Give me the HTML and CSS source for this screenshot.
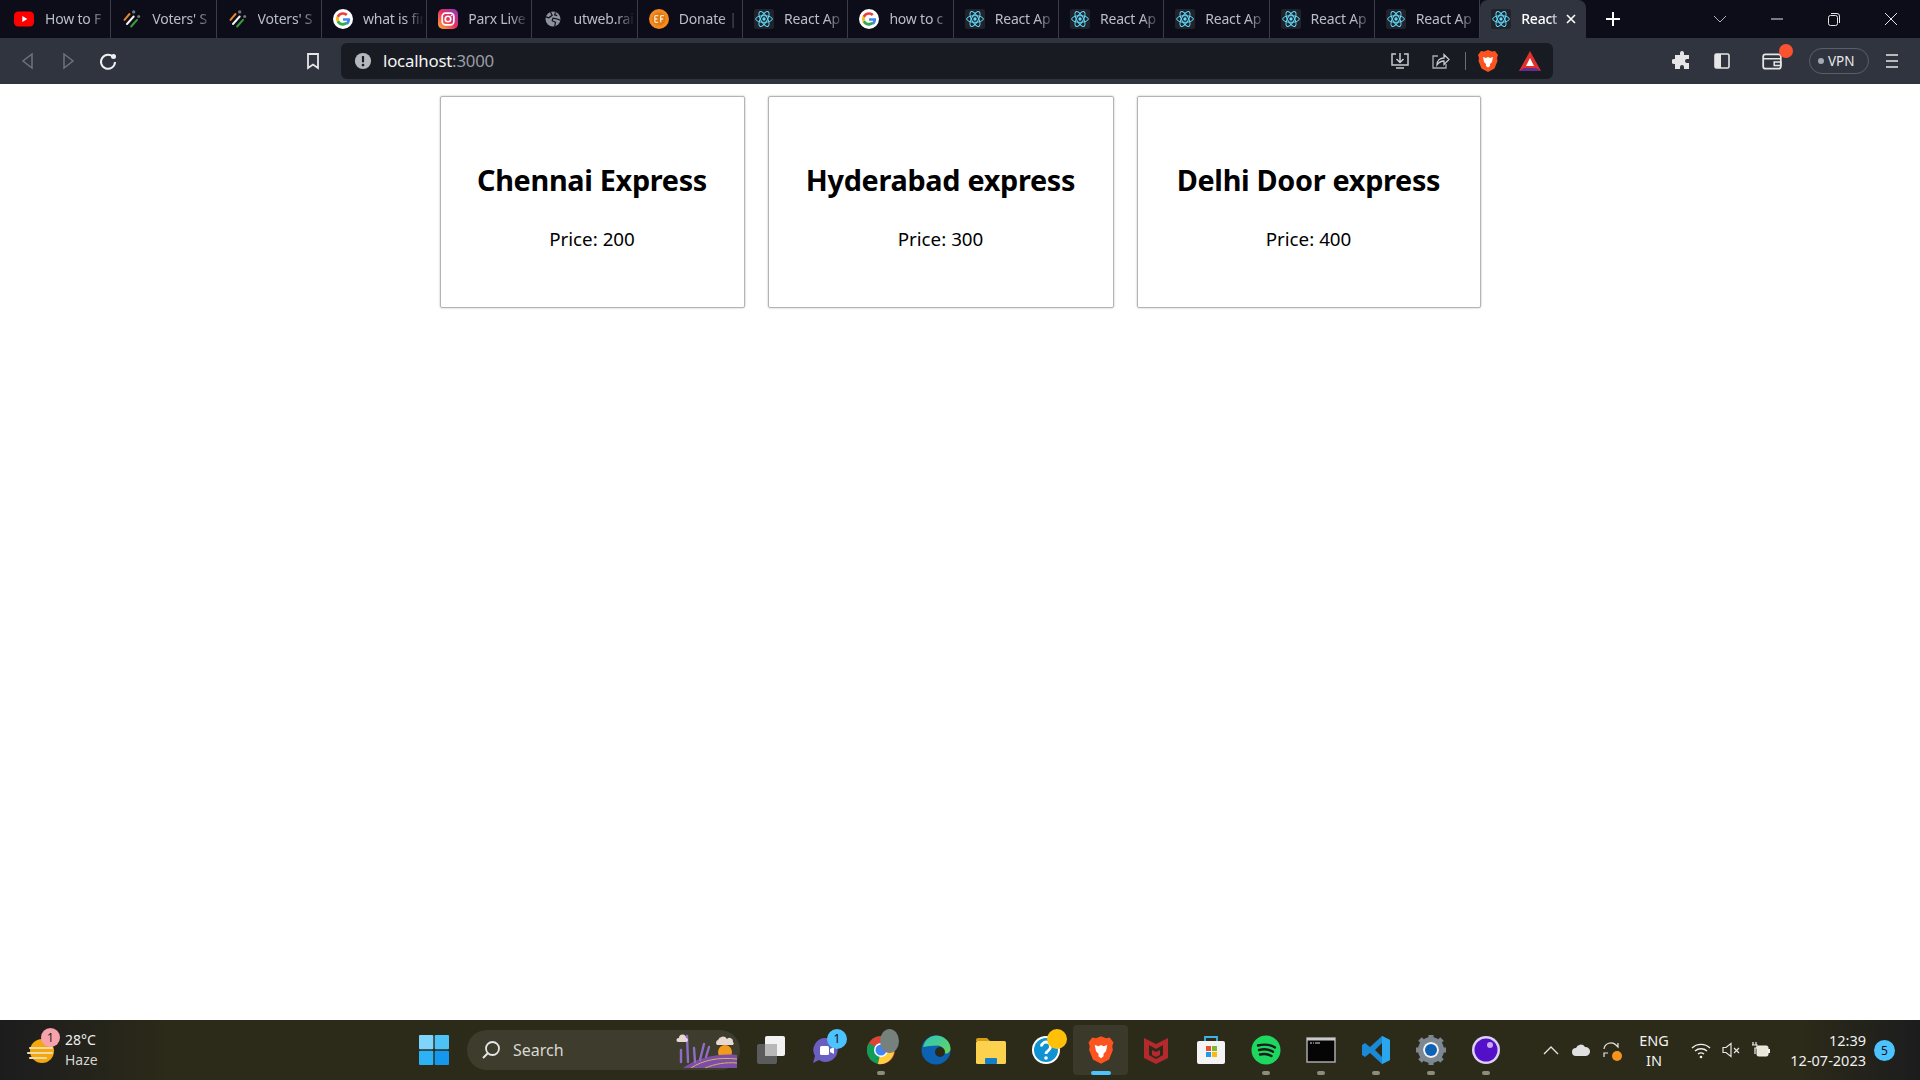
FILE: index.html
```html
<!DOCTYPE html>
<html lang="en">
<head>
<meta charset="UTF-8">
<title>React App</title>
<link rel="stylesheet" href="styles.css">
</head>
<body>
<svg class="defs" width="0" height="0">
  <symbol id="react" viewBox="0 0 24 24">
    <rect width="24" height="24" rx="3" fill="#20232a"/>
    <g fill="none" stroke="#61dafb" stroke-width="1.2">
      <ellipse cx="12" cy="12" rx="10" ry="4"/>
      <ellipse cx="12" cy="12" rx="10" ry="4" transform="rotate(60 12 12)"/>
      <ellipse cx="12" cy="12" rx="10" ry="4" transform="rotate(120 12 12)"/>
    </g>
    <circle cx="12" cy="12" r="2" fill="#61dafb"/>
  </symbol>
  <symbol id="google" viewBox="0 0 24 24">
    <circle cx="12" cy="12" r="12" fill="#fff"/>
    <path d="M12 11v3h5a5 5 0 0 1-1.8 2.6l2.7 2.2c1.700-1.500 2.600-3.800 2.600-6.400 0-.5 0-1-.1-1.400z" fill="#4285f4"/>
    <path d="M7.200 13.400l-2.800 2.200C5.800 18.300 8.700 20 12 20c2.300 0 4.300-.8 5.900-2.200l-2.700-2.200c-.8.600-1.900 1-3.200 1-2.200 0-4.100-1.400-4.800-3.200z" fill="#34a853"/>
    <path d="M4.400 8.400a8.200 8.200 0 0 0 0 7.200l2.800-2.200a5 5 0 0 1 0-2.800z" fill="#fbbc05"/>
    <path d="M12 7c1.300 0 2.400.5 3.300 1.300l2.400-2.400A8 8 0 0 0 12 4C8.700 4 5.800 5.800 4.400 8.400l2.800 2.200C7.900 8.500 9.800 7 12 7z" fill="#ea4335"/>
  </symbol>
  <symbol id="voters" viewBox="0 0 24 24">
    <g stroke-width="2.400" stroke-linecap="round" fill="none">
      <path d="M3 13l6-7" stroke="#e8842c"/>
      <path d="M6 18l8-9" stroke="#f2f2f2"/>
      <path d="M11 21l7-8" stroke="#3e9a3e"/>
    </g>
    <circle cx="14" cy="3.500" r="2" fill="#777"/>
    <circle cx="20" cy="9" r="1.800" fill="#777"/>
  </symbol>
  <symbol id="brave" viewBox="0 0 24 24">
    <path d="M12 1l4 1.500 3-.5 3 4-1 3 .5 3-3 7.500L12 23l-6.500-3.500-3-7.500.5-3-1-3 3-4 3 .5z" fill="#fb5420"/>
    <path d="M7 8l3 1 2-1 2 1 3-1-1 5-2 2v2l-2 1.500L10 17v-2l-2-2z" fill="#fff"/>
  </symbol>
</svg>

<header class="tabstrip">
  <div class="tab tab-first">
    <svg class="tab-icon" viewBox="0 0 24 24"><rect y="3" width="24" height="18" rx="5" fill="#f00"/><path d="M10 8.500l6 3.500-6 3.500z" fill="#fff"/></svg>
    <span class="tab-title">How to F</span>
  </div>
  <div class="tab"><svg class="tab-icon"><use href="#voters"/></svg><span class="tab-title">Voters' S</span></div>
  <div class="tab"><svg class="tab-icon"><use href="#voters"/></svg><span class="tab-title">Voters' S</span></div>
  <div class="tab"><svg class="tab-icon"><use href="#google"/></svg><span class="tab-title">what is fir</span></div>
  <div class="tab">
    <svg class="tab-icon" viewBox="0 0 24 24">
      <defs><linearGradient id="insta" x1="0" y1="1" x2="1" y2="0"><stop offset="0" stop-color="#fdb13a"/><stop offset=".5" stop-color="#e8305f"/><stop offset="1" stop-color="#8a3ac4"/></linearGradient></defs>
      <rect width="24" height="24" rx="6" fill="url(#insta)"/>
      <rect x="5" y="5" width="14" height="14" rx="4" fill="none" stroke="#fff" stroke-width="2"/>
      <circle cx="12" cy="12" r="3.300" fill="none" stroke="#fff" stroke-width="2"/>
      <circle cx="16.200" cy="7.800" r="1" fill="#fff"/>
    </svg>
    <span class="tab-title">Parx Live</span>
  </div>
  <div class="tab">
    <svg class="tab-icon" viewBox="0 0 24 24"><circle cx="12" cy="12" r="9" fill="#8d929c"/><path d="M9 3.500l2 4-4 3-3.500-1M14 21l1-5-4-2 1-3 5 1 3.800 1.500M15 4l-1 3 3 1" fill="none" stroke="#0c0d18" stroke-width="1.400"/></svg>
    <span class="tab-title">utweb.rai</span>
  </div>
  <div class="tab">
    <svg class="tab-icon" viewBox="0 0 24 24"><circle cx="12" cy="12" r="12" fill="#f58a1f"/><circle cx="12" cy="12" r="8" fill="#e07a14"/><path d="M7 8h4M7 12h3M7 16h4M7 8v8M14 8h4M14 12h3M14 8v8" fill="none" stroke="#fde3c4" stroke-width="1.600"/></svg>
    <span class="tab-title">Donate |</span>
  </div>
  <div class="tab"><svg class="tab-icon"><use href="#react"/></svg><span class="tab-title">React Ap</span></div>
  <div class="tab"><svg class="tab-icon"><use href="#google"/></svg><span class="tab-title">how to c</span></div>
  <div class="tab"><svg class="tab-icon"><use href="#react"/></svg><span class="tab-title">React Ap</span></div>
  <div class="tab"><svg class="tab-icon"><use href="#react"/></svg><span class="tab-title">React Ap</span></div>
  <div class="tab"><svg class="tab-icon"><use href="#react"/></svg><span class="tab-title">React Ap</span></div>
  <div class="tab"><svg class="tab-icon"><use href="#react"/></svg><span class="tab-title">React Ap</span></div>
  <div class="tab"><svg class="tab-icon"><use href="#react"/></svg><span class="tab-title">React Ap</span></div>
  <div class="tab tab-active">
    <svg class="tab-icon"><use href="#react"/></svg>
    <span class="tab-title">React</span>
    <svg class="tab-close" viewBox="0 0 12 12"><path d="M2 2l8 8M10 2l-8 8" stroke="#fff" stroke-width="1.600"/></svg>
  </div>
  <svg class="new-tab" viewBox="0 0 16 16"><path d="M8 1v14M1 8h14" stroke="#fff" stroke-width="2"/></svg>
  <div class="window-controls">
    <svg class="win-btn" viewBox="0 0 16 16"><path d="M2 5l6 6 6-6" fill="none" stroke="#b0b3bb"/></svg>
    <svg class="win-btn" viewBox="0 0 16 16"><path d="M2 8h12" stroke="#e6e6e6"/></svg>
    <svg class="win-btn" viewBox="0 0 16 16"><rect x="2.500" y="4.500" width="9" height="10" rx="2" fill="none" stroke="#e6e6e6"/><path d="M5 2.500h6a2.500 2.500 0 0 1 2.500 2.500v7" fill="none" stroke="#e6e6e6"/></svg>
    <svg class="win-btn" viewBox="0 0 16 16"><path d="M2 2l12 12M14 2L2 14" stroke="#e6e6e6"/></svg>
  </div>
</header>

<nav class="toolbar">
  <svg class="tool" viewBox="0 0 20 20"><path d="M14 3L5 10l9 7z" fill="none" stroke="#6e727c" stroke-width="1.500"/></svg>
  <svg class="tool" viewBox="0 0 20 20"><path d="M6 3l9 7-9 7z" fill="none" stroke="#6e727c" stroke-width="1.500"/></svg>
  <svg class="tool" viewBox="0 0 20 20"><path d="M15.500 6.500A7 7 0 1 0 17 11" fill="none" stroke="#f0f0f0" stroke-width="2"/><circle cx="15.500" cy="5.500" r="2.500" fill="#f0f0f0"/></svg>
  <svg class="tool tool-bookmark" viewBox="0 0 20 20"><path d="M5 3h10v14l-5-3.500L5 17z" fill="none" stroke="#e6e6e6" stroke-width="1.800"/></svg>
  <div class="address">
    <svg class="address-info" viewBox="0 0 20 20"><circle cx="10" cy="10" r="9" fill="#b4b7bd"/><path d="M10 4.500v7" stroke="#181b22" stroke-width="2.400"/><circle cx="10" cy="14.500" r="1.500" fill="#181b22"/></svg>
    <span class="url">localhost<span class="url-port">:3000</span></span>
    <div class="address-actions">
      <svg class="tool" viewBox="0 0 20 20"><path d="M6 3H2v11h16V3h-4M10 2v9M6.500 8l3.500 3.500L13.500 8M6 17h8" fill="none" stroke="#c8cad0" stroke-width="1.500"/></svg>
      <svg class="tool" viewBox="0 0 20 20"><path d="M8 5H3v12h13v-4" fill="none" stroke="#a9acb3" stroke-width="1.300"/><path d="M7 14c0-5 3-7 7-7V3.500l5 5-5 5V10c-3 0-5 1-7 4z" fill="none" stroke="#c8cad0" stroke-width="1.300"/></svg>
      <span class="address-divider"></span>
      <svg class="tool tool-large" viewBox="0 0 24 24"><use href="#brave"/></svg>
      <svg class="tool tool-large" viewBox="0 0 24 24"><path d="M12 2l11 20H1z" fill="#e0312c"/><path d="M1 22l5-3h12l5 3z" fill="#662d91"/><path d="M12 9l4 8H8z" fill="#fff"/></svg>
    </div>
  </div>
  <div class="toolbar-right">
    <svg class="tool" viewBox="0 0 20 20"><path d="M8 2a2 2 0 0 1 4 0v2h5v4h-2a2 2 0 0 0 0 4h2v6h-5v-2a2 2 0 0 0-4 0v2H3v-5H2a2.500 2.500 0 0 1 0-5h1V4h5z" fill="#e6e6e6"/></svg>
    <svg class="tool" viewBox="0 0 20 20"><rect x="3" y="3" width="14" height="14" rx="1.500" fill="none" stroke="#e6e6e6" stroke-width="1.600"/><rect x="3" y="3" width="6" height="14" fill="#e6e6e6"/></svg>
    <div class="wallet">
      <svg class="wallet-icon" viewBox="0 0 20 20"><rect x="2" y="4" width="16" height="13" rx="2" fill="none" stroke="#e6e6e6" stroke-width="1.600"/><path d="M2 8h16M12 11h6v3h-6z" fill="none" stroke="#e6e6e6" stroke-width="1.400"/></svg>
      <span class="wallet-dot"></span>
    </div>
    <div class="vpn"><span class="vpn-dot"></span>VPN</div>
    <svg class="tool" viewBox="0 0 20 20"><path d="M4 4h12M4 10h12M4 16h12" stroke="#e6e6e6" stroke-width="1.500"/></svg>
  </div>
</nav>

<main class="page">
  <div class="card">
    <h2 class="card-title">Chennai Express</h2>
    <p class="card-price">Price: 200</p>
  </div>
  <div class="card">
    <h2 class="card-title">Hyderabad express</h2>
    <p class="card-price">Price: 300</p>
  </div>
  <div class="card">
    <h2 class="card-title">Delhi Door express</h2>
    <p class="card-price">Price: 400</p>
  </div>
</main>

<footer class="taskbar">
  <div class="weather">
    <div class="weather-icon">
      <svg viewBox="0 0 32 32" width="32" height="32"><circle cx="17" cy="17" r="12" fill="#f5a80c"/><path d="M5 14h22M3 19h24M5 24h16" stroke="#eed9a8" stroke-width="2.200" stroke-linecap="round"/></svg>
      <span class="weather-badge">1</span>
    </div>
    <div class="weather-text">
      <span>28°C</span>
      <span class="weather-sub">Haze</span>
    </div>
  </div>

  <svg class="start" viewBox="0 0 30 30">
    <rect x="0" y="0" width="14.300" height="14.300" rx="1" fill="#7fd4fb"/>
    <rect x="15.700" y="0" width="14.300" height="14.300" rx="1" fill="#4cc2f7"/>
    <rect x="0" y="15.700" width="14.300" height="14.300" rx="1" fill="#2bb3f5"/>
    <rect x="15.700" y="15.700" width="14.300" height="14.300" rx="1" fill="#1398ee"/>
  </svg>

  <div class="search">
    <svg class="search-icon" viewBox="0 0 20 20"><circle cx="11.500" cy="8.500" r="6.500" fill="none" stroke="#e6e6e6" stroke-width="1.800"/><path d="M7 13l-5 5" stroke="#e6e6e6" stroke-width="2"/></svg>
    <span class="search-text">Search</span>
    <svg class="search-art" viewBox="0 0 62 36">
      <circle cx="50" cy="20" r="7" fill="#f29a1e"/>
      <path d="M8 36c14-10 34-15 54-13v13z" fill="#7d4ea8"/>
      <path d="M16 36c12-8 28-11 46-9M30 36c10-4 20-6 32-5" fill="none" stroke="#d4b45c" stroke-width="1"/>
      <g stroke="#8e6cc7" stroke-width="2.400" stroke-linecap="round"><path d="M6 30V18M13 30L12 4M20 30l-1-14M25 28l4-16M31 25l3-10"/></g>
      <path d="M42 13a3 3 0 0 1 1-5 5 5 0 0 1 9-1 3.500 3.500 0 0 1 6 3 2 2 0 0 1 0 3z" fill="#e8d8d4"/>
      <path d="M3 10a2 2 0 0 1 1-4 3.500 3.500 0 0 1 7 0 2 2 0 0 1 0 4z" fill="#e8d8d4"/>
    </svg>
  </div>

  <div class="apps">
    <div class="app">
      <svg class="app-icon" viewBox="0 0 30 30"><rect x="1" y="9" width="20" height="20" rx="2" fill="#5b5b5b"/><rect x="9" y="1" width="20" height="20" rx="2" fill="#f2f2f2"/><rect x="9" y="9" width="12" height="12" fill="#b8b8b8"/></svg>
    </div>
    <div class="app">
      <svg class="app-icon" viewBox="0 0 30 30"><path d="M15 3a12 12 0 1 1-7 22l-6 3 2-7A12 12 0 0 1 15 3z" fill="#6a5fc0"/><rect x="9" y="11" width="9" height="9" rx="1.500" fill="#fff"/><path d="M19 14l4-2v7l-4-2z" fill="#fff"/></svg>
      <span class="app-badge app-badge-blue">1</span>
    </div>
    <div class="app app-open">
      <svg class="app-icon" viewBox="0 0 30 30"><circle cx="15" cy="15" r="14" fill="#db4437"/><path d="M15 15L3 8a14 14 0 0 0 9 21z" fill="#0f9d58"/><path d="M15 15l13-2a14 14 0 0 1-16 16z" fill="#ffcd40"/><circle cx="15" cy="15" r="7" fill="#fff"/><circle cx="15" cy="15" r="5.500" fill="#4285f4"/></svg>
      <span class="app-avatar"></span>
    </div>
    <div class="app">
      <svg class="app-icon" viewBox="0 0 30 30">
        <defs><linearGradient id="edge" x1="0" y1="0" x2="1" y2="1"><stop offset="0" stop-color="#2bc4c0"/><stop offset="1" stop-color="#6bd45a"/></linearGradient></defs>
        <circle cx="15" cy="15" r="14.500" fill="#0c62b0"/>
        <path d="M2 12C4 4 10 .5 15 .5c8 0 14.500 6 14.500 13 0 5-5 6-8 4 2-3 0-7-5-7-6 0-10 1-14.500 1.500z" fill="url(#edge)"/>
        <circle cx="19" cy="17" r="5" fill="#2b2918"/>
      </svg>
    </div>
    <div class="app">
      <svg class="app-icon" viewBox="0 0 30 30"><path d="M0 5a2 2 0 0 1 2-2h9l3 3h-14z" fill="#d69c12"/><rect x="0" y="6" width="30" height="23" rx="1.500" fill="#fcd14d"/><rect x="9" y="23" width="12" height="6" rx="1" fill="#1180c9"/></svg>
    </div>
    <div class="app">
      <svg class="app-icon" viewBox="0 0 30 30"><circle cx="15" cy="15" r="14" fill="#fff"/><circle cx="15" cy="15" r="12" fill="#0e92d2"/><path d="M10.500 11.500a4.500 4.500 0 1 1 7 3.800c-1.500 1-2.500 1.700-2.500 3.700" fill="none" stroke="#fff" stroke-width="2.800"/><circle cx="15" cy="23" r="1.800" fill="#fff"/></svg>
      <span class="app-badge app-badge-yellow"></span>
    </div>
    <div class="app app-active">
      <svg class="app-icon"><use href="#brave"/></svg>
    </div>
    <div class="app">
      <svg class="app-icon" viewBox="0 0 30 30"><path d="M3 3l12 6 12-6v20l-12 6-12-6z" fill="#b42a2c"/><path d="M8 10l7 4 7-4v10l-7 4-7-4z" fill="#2b2918"/><path d="M11 15l4 2 4-2v5l-4 2-4-2z" fill="#b42a2c"/></svg>
    </div>
    <div class="app">
      <svg class="app-icon" viewBox="0 0 30 30"><path d="M9 6V2h12v4" fill="none" stroke="#3cb4e8" stroke-width="1.800"/><rect x="1" y="6" width="28" height="23" rx="2" fill="#f4f4f4"/><rect x="10" y="11" width="5" height="5" fill="#e8512f"/><rect x="16" y="11" width="5" height="5" fill="#7fb92a"/><rect x="10" y="17" width="5" height="5" fill="#1f9de0"/><rect x="16" y="17" width="5" height="5" fill="#fdb813"/></svg>
    </div>
    <div class="app app-open">
      <svg class="app-icon" viewBox="0 0 30 30"><circle cx="15" cy="15" r="14.500" fill="#1ed760"/><path d="M7 10.500c6-1.500 12-1 17 2M8 15c5-1.300 10-.8 14 1.800M9 19.500c4-1 8-.6 11.500 1.500" fill="none" stroke="#1b1b1b" stroke-width="2.400" stroke-linecap="round"/></svg>
    </div>
    <div class="app app-open">
      <svg class="app-icon" viewBox="0 0 30 30"><rect x="1" y="3" width="28" height="24" fill="#050505" stroke="#a9a9a9" stroke-width="1.500"/><rect x="1" y="3" width="28" height="2.500" fill="#c9c9c9"/><path d="M4 8h2M7 8h1M9 8h5" stroke="#ddd"/></svg>
    </div>
    <div class="app app-open">
      <svg class="app-icon" viewBox="0 0 30 30"><path d="M21 1l8 4v20l-8 4L9 18l-5 4-3-2v-10l3-2 5 4z" fill="#1a8ad6"/><path d="M21 8l-7 7 7 7z" fill="#2b2918"/><path d="M21 1l8 4v20l-8 4z" fill="#2aa6ef"/></svg>
    </div>
    <div class="app app-open">
      <svg class="app-icon" viewBox="0 0 30 30"><circle cx="15" cy="15" r="10.500" fill="none" stroke="#7c8792" stroke-width="5"/><g stroke="#7c8792" stroke-width="5"><path d="M15 0v5M15 25v5M0 15h5M25 15h5M4 4l4 4M22 22l4 4M26 4l-4 4M8 22l-4 4"/></g><circle cx="15" cy="15" r="8" fill="#f1f1f1"/><circle cx="15" cy="15" r="6" fill="#0d62b5"/></svg>
    </div>
    <div class="app app-open">
      <svg class="app-icon" viewBox="0 0 30 30"><circle cx="15" cy="15" r="14" fill="#dcd0f4"/><circle cx="15" cy="15" r="11.500" fill="#5410c8"/><circle cx="19" cy="10" r="3" fill="#c6a9f2"/></svg>
    </div>
  </div>

  <div class="tray">
    <svg class="tray-icon" viewBox="0 0 20 20"><path d="M3 14l7-7 7 7" fill="none" stroke="#e6e6e6" stroke-width="1.300"/></svg>
    <svg class="tray-icon" viewBox="0 0 20 20"><path d="M5 16a4 4 0 0 1 0-8 5 5 0 0 1 9-1 4.500 4.500 0 0 1 1 9z" fill="#e0e0e0"/></svg>
    <div class="tray-sync">
      <svg class="tray-icon" viewBox="0 0 20 20"><path d="M3 9a7 7 0 0 1 12-4l2 2V3M17 11a7 7 0 0 1-5 6" fill="none" stroke="#e6e6e6" stroke-width="1.200"/><path d="M3 17v-4h4" fill="none" stroke="#e6e6e6" stroke-width="1.200"/></svg>
      <span class="sync-dot"></span>
    </div>
    <div class="lang"><span>ENG</span><span>IN</span></div>
    <svg class="tray-icon" viewBox="0 0 20 20"><path d="M1 8a13 13 0 0 1 18 0M4 11a9 9 0 0 1 12 0M7 14a5 5 0 0 1 6 0" fill="none" stroke="#f0f0f0" stroke-width="1.400"/><circle cx="10" cy="17" r="1.300" fill="#f0f0f0"/></svg>
    <svg class="tray-icon" viewBox="0 0 20 20"><path d="M2 7.500h3l5-4v13l-5-4H2z" fill="none" stroke="#e6e6e6" stroke-width="1.200"/><path d="M13 8l5 5M18 8l-5 5" stroke="#e6e6e6" stroke-width="1.200"/></svg>
    <svg class="tray-icon" viewBox="0 0 20 20"><path d="M5 2v3M2 2v3M1 5h5v3H4v6" fill="none" stroke="#f0f0f0" stroke-width="1.200"/><rect x="6" y="6" width="11" height="10" rx="1.500" fill="#e8e8d8" stroke="#f0f0f0"/><rect x="17" y="9" width="2" height="4" fill="#f0f0f0"/></svg>
    <div class="clock"><span>12:39</span><span>12-07-2023</span></div>
    <span class="notif">5</span>
  </div>
</footer>
</body>
</html>
```

FILE: styles.css
```css
* {
  box-sizing: border-box;
}

html, body {
  height: 100%;
}

body {
  margin: 0;
  display: flex;
  flex-direction: column;
  height: 100vh;
  overflow: hidden;
  background-color: #fff;
  font-family: "Noto Sans", "Open Sans", sans-serif;
  color: #000;
}

.defs {
  position: absolute;
}

/* tab strip */

.tabstrip {
  display: flex;
  align-items: stretch;
  height: 38px;
  padding-left: 6px;
  background-color: #0c0d18;
}

.tab {
  display: flex;
  align-items: center;
  width: 105.3px;
  height: 100%;
  padding: 0 2px 0 11px;
  border-right: 1px solid #3a3d47;
}

.tab-first {
  padding-left: 8px;
}

.tab-icon {
  flex: none;
  width: 20px;
  height: 20px;
  margin-right: 10px;
}

.tab-first .tab-icon {
  margin-right: 11px;
}

.tab-title {
  flex: 1;
  overflow: hidden;
  white-space: nowrap;
  margin-bottom: 2px;
  font-size: 14px;
  letter-spacing: -0.2px;
  color: #b9bdc6;
  -webkit-mask-image: linear-gradient(to right, #000 70%, transparent 100%);
  mask-image: linear-gradient(to right, #000 70%, transparent 100%);
}

.tab-active {
  width: 106px;
  padding-right: 9px;
  border-right: none;
  border-radius: 8px 8px 0 0;
  background-color: #30343f;
}

.tab-active .tab-title {
  color: #fff;
  font-weight: 500;
}

.tab-close {
  flex: none;
  width: 12px;
  height: 12px;
  margin-left: 2px;
}

.new-tab {
  flex: none;
  width: 16px;
  height: 16px;
  margin: 11px 0 0 19px;
}

.window-controls {
  display: flex;
  align-items: center;
  margin-left: auto;
  padding-right: 21px;
}

.win-btn {
  width: 16px;
  height: 16px;
  margin-left: 41px;
}

/* toolbar */

.toolbar {
  display: flex;
  align-items: center;
  height: 46px;
  padding: 0 8px;
  background-color: #30343f;
}

.tool {
  flex: none;
  width: 20px;
  height: 20px;
  margin: 0 10px;
}

.tool-bookmark {
  margin-left: 175px;
  margin-right: 18px;
}

.address {
  display: flex;
  align-items: center;
  width: 1213px;
  height: 36px;
  padding: 0 3px 0 13px;
  border-radius: 6px;
  background-color: #181b22;
}

.address-info {
  flex: none;
  width: 18px;
  height: 18px;
  margin-right: 11px;
}

.url {
  margin-bottom: 2px;
  font-size: 16.8px;
  letter-spacing: -0.2px;
  color: #f4f4f4;
}

.url-port {
  color: #9a9da5;
}

.address-actions {
  display: flex;
  align-items: center;
  margin-left: auto;
}

.address-divider {
  width: 1px;
  height: 18px;
  margin: 0 2.500px 0 4.500px;
  background-color: #6a6d76;
}

.tool-large {
  width: 24px;
  height: 24px;
  margin: 0 8px;
}

.tool-large:last-child {
  margin-left: 10px;
}

.toolbar-right {
  display: flex;
  align-items: center;
  margin-left: 109px;
}

.wallet {
  position: relative;
  margin-left: 9px;
  height: 22px;
}

.wallet-icon {
  display: block;
  width: 22px;
  height: 22px;
  margin: 0 10px;
}

.wallet-dot {
  position: absolute;
  top: -6px;
  right: 0;
  width: 14px;
  height: 14px;
  border-radius: 50%;
  background-color: #fb5330;
}

.vpn {
  display: flex;
  align-items: center;
  gap: 4px;
  flex: none;
  width: 60px;
  height: 26px;
  margin: 0 3px 0 16px;
  padding-left: 8px;
  border: 1px solid #5a5e6a;
  border-radius: 13px;
  font-size: 13.5px;
  color: #e8e8e8;
}

.vpn-dot {
  width: 6px;
  height: 6px;
  border-radius: 50%;
  background-color: #a6a9b0;
}

/* page content */

.page {
  flex: 1;
  display: grid;
  grid-template-columns: 305px 346px 344px;
  justify-content: center;
  align-items: start;
  gap: 23px;
  padding-top: 12px;
  background-color: #fff;
}

.card {
  height: 212px;
  border: 1px solid #b4b4b4;
  border-radius: 2px;
  box-shadow: 0 0 2px rgba(0, 0, 0, 0.3);
  text-align: center;
}

.card-title {
  margin: 64px 0 0;
  font-size: 28.8px;
  line-height: 38px;
  font-weight: 700;
  letter-spacing: -0.3px;
  white-space: nowrap;
}

.card-price {
  margin: 28px 0 0;
  font-size: 18.8px;
  line-height: 24px;
}

/* taskbar */

.taskbar {
  display: flex;
  align-items: center;
  height: 60px;
  padding-left: 25px;
  background: linear-gradient(to right, #1c1c1e 0, #2c2a18 170px, #2c2a18 1800px, #1c1c1e 100%);
  color: #f0f0f0;
}

.weather {
  display: flex;
  align-items: center;
  flex: none;
  width: 394px;
}

.weather-icon {
  position: relative;
  width: 32px;
  height: 32px;
  margin-right: 8px;
}

.weather-badge {
  position: absolute;
  top: -6px;
  right: -3px;
  width: 19px;
  height: 19px;
  border-radius: 50%;
  background-color: #f7a1ad;
  color: #222;
  font-size: 12px;
  line-height: 19px;
  text-align: center;
}

.weather-text {
  display: flex;
  flex-direction: column;
  font-size: 14px;
  line-height: 20px;
}

.weather-sub {
  color: #d6d6d0;
}

.start {
  flex: none;
  width: 30px;
  height: 30px;
}

.search {
  display: flex;
  align-items: center;
  flex: none;
  width: 273px;
  height: 40px;
  margin-left: 18px;
  padding-left: 14px;
  border-radius: 20px;
  background-color: #3e3d2d;
}

.search-icon {
  flex: none;
  width: 20px;
  height: 20px;
}

.search-text {
  margin-left: 12px;
  font-size: 16px;
  color: #d8d8d2;
}

.search-art {
  flex: none;
  width: 62px;
  height: 36px;
  margin-left: auto;
  margin-right: 3px;
}

.apps {
  display: flex;
  align-items: center;
  flex: none;
  margin-left: 3px;
}

.app {
  position: relative;
  display: flex;
  align-items: center;
  justify-content: center;
  width: 55px;
  height: 50px;
}

.app-icon {
  width: 30px;
  height: 30px;
}

.app-open::after,
.app-active::after {
  content: '';
  position: absolute;
  bottom: 0;
  left: 50%;
  width: 8px;
  height: 4px;
  margin-left: -4px;
  border-radius: 2px;
  background-color: #8d8c80;
}

.app-active {
  border-radius: 4px;
  background-color: #3a392a;
}

.app-active::after {
  width: 20px;
  margin-left: -10px;
  background-color: #4cc2ff;
}

.app-badge {
  position: absolute;
  top: 4px;
  right: 6px;
  width: 20px;
  height: 20px;
  border-radius: 50%;
  font-size: 12px;
  line-height: 20px;
  text-align: center;
  color: #111;
}

.app-badge-blue {
  background-color: #4cc2ff;
}

.app-badge-yellow {
  background-color: #ffc107;
}

.app-avatar {
  position: absolute;
  top: 4px;
  right: 9px;
  width: 19px;
  height: 24px;
  border-radius: 50%;
  background-color: #76807c;
}

.tray {
  display: flex;
  align-items: center;
  flex: 1;
  margin-left: 28px;
  font-size: 14.5px;
}

.tray-icon {
  flex: none;
  width: 20px;
  height: 20px;
  margin-right: 10px;
}

.tray-sync {
  position: relative;
  height: 20px;
}

.sync-dot {
  position: absolute;
  right: 9px;
  bottom: -1px;
  width: 10px;
  height: 10px;
  border-radius: 50%;
  background-color: #f7941d;
}

.lang {
  display: flex;
  flex-direction: column;
  align-items: center;
  width: 42px;
  margin: 0 16px 0 2px;
  line-height: 20px;
}

.clock {
  display: flex;
  flex-direction: column;
  align-items: flex-end;
  margin-left: auto;
  line-height: 20px;
  white-space: nowrap;
}

.notif {
  flex: none;
  width: 21px;
  height: 21px;
  margin: 0 25px 0 8px;
  border-radius: 50%;
  background-color: #4cc2ff;
  color: #111;
  font-size: 12px;
  line-height: 21px;
  text-align: center;
}
```
